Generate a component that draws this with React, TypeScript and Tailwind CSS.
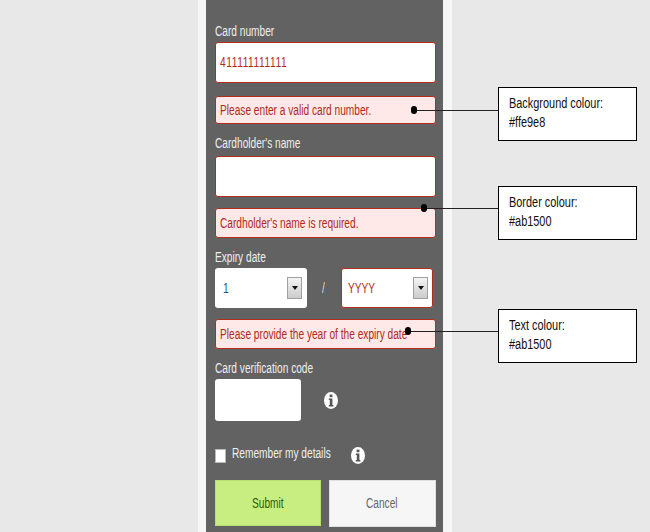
import type { ReactNode } from "react";

function Info({ className }: { className: string }) {
  return (
    <svg viewBox="0 0 14 17" width="14" height="17" className={className}>
      <ellipse cx="7" cy="8.5" rx="7" ry="8.5" fill="#ffffff" />
      <rect x="5.6" y="2.6" width="2.8" height="2.6" fill="#555555" />
      <path d="M4.8 6.6h3.6v6.4h1v1.4H4.8V13h1V8h-1z" fill="#555555" />
    </svg>
  );
}

function T({ children }: { children: ReactNode }) {
  return <span className="inline-block origin-left scale-x-[0.725] whitespace-nowrap text-[14px]">{children}</span>;
}

function Label({ children, className = "" }: { children: ReactNode; className?: string }) {
  return (
    <div className={`h-[14px] leading-[13px] text-[#eeeeee] ${className}`}>
      <T>{children}</T>
    </div>
  );
}

function ErrorBox({ children, className = "" }: { children: ReactNode; className?: string }) {
  return (
    <div className={`flex w-[221px] items-center rounded-[3px] border border-[#b32d1c] bg-[#ffe9e8] pl-[4px] text-[#b02a1a] ${className}`}>
      <T>{children}</T>
    </div>
  );
}

function SelectArrow() {
  return (
    <div className="flex h-[22px] w-[15px] items-center justify-center border border-[#a0a0a0] bg-gradient-to-b from-[#f4f4f4] to-[#cccccc]">
      <svg viewBox="0 0 6 4" width="6" height="4">
        <path d="M0 0h6L3 4z" fill="#111111" />
      </svg>
    </div>
  );
}

function Callout({ title, value, className }: { title: string; value: string; className: string }) {
  return (
    <div className={`absolute left-[498px] h-[54px] w-[139px] border border-black bg-white pl-[10px] pt-[6px] text-[14px] leading-[19px] text-[#111111] ${className}`}>
      <div className="origin-left scale-x-[0.78] whitespace-nowrap">{title}</div>
      <div className="origin-left scale-x-[0.78] whitespace-nowrap">{value}</div>
    </div>
  );
}

function Pointer({ x, y }: { x: number; y: number }) {
  return (
    <>
      <div className="absolute h-px bg-[#222222]" style={{ left: x, top: y, width: 498 - x }} />
      <div className="absolute h-[8px] w-[6px] rounded-full bg-black" style={{ left: x - 3, top: y - 4 }} />
    </>
  );
}

export default function App() {
  return (
    <div className="relative h-[532px] w-[650px] overflow-hidden bg-[#e8e8e8] font-['Liberation_Sans',sans-serif]">
      <div className="ml-[198px] h-full w-[254px] bg-[#f6f6f6] pl-[8px] pr-[9px]">
        <div className="h-full w-[237px] bg-[#626262] pl-[9px] pt-[24px]">
          <Label>Card number</Label>
          <div className="mt-[4px] flex h-[41px] w-[221px] items-center rounded-[3px] border border-[#b32d1c] bg-white pl-[4px] tracking-[0.8px] text-[#b02a1a]">
            <T>411111111111</T>
          </div>
          <ErrorBox className="mt-[13px] h-[28px]">Please enter a valid card number.</ErrorBox>

          <Label className="mt-[12px]">Cardholder's name</Label>
          <div className="mt-[6px] h-[41px] w-[221px] rounded-[3px] border border-[#b32d1c] bg-white" />
          <ErrorBox className="mt-[11px] h-[30px]">Cardholder's name is required.</ErrorBox>

          <Label className="mt-[12px]">Expiry date</Label>
          <div className="mt-[4px] flex items-center">
            <div className="flex h-[40px] w-[92px] items-center rounded-[3px] bg-white pl-[8px] pr-[5px] text-[#1a5a80]">
              <T>1</T>
              <div className="ml-auto">
                <SelectArrow />
              </div>
            </div>
            <div className="ml-[15px] w-[4px] text-[#dddddd]">
              <T>/</T>
            </div>
            <div className="ml-[15px] flex h-[40px] w-[92px] items-center rounded-[3px] border border-[#b32d1c] bg-white pl-[6px] pr-[4px] text-[#b02a1a]">
              <T>YYYY</T>
              <div className="ml-auto">
                <SelectArrow />
              </div>
            </div>
          </div>
          <ErrorBox className="mt-[11px] h-[30px]">Please provide the year of the expiry date</ErrorBox>

          <Label className="mt-[12px]">Card verification code</Label>
          <div className="mt-[4px] flex items-center">
            <div className="h-[42px] w-[86px] rounded-[3px] bg-white" />
            <Info className="ml-[23px]" />
          </div>

          <div className="mt-[24px] flex h-[20px] items-start">
            <div className="mt-[4px] h-[14px] w-[11px] border border-[#b8b8b8] bg-white" />
            <Label className="ml-[6px] mt-[1px] w-[99px]">Remember my details</Label>
            <Info className="ml-[20px] mt-[2px]" />
          </div>

          <div className="mt-[15px] flex items-start">
            <div className="flex h-[46px] w-[106px] items-center border border-[#b5e070] bg-[#c8ee82] pl-[36px] text-[#2f5a0c]">
              <T>Submit</T>
            </div>
            <div className="ml-[8px] flex h-[47px] w-[107px] items-center border border-[#e0e0e0] bg-[#f6f6f6] pl-[36px] text-[#666666]">
              <T>Cancel</T>
            </div>
          </div>
        </div>
      </div>

      <Pointer x={414} y={110} />
      <Pointer x={424} y={208} />
      <Pointer x={408} y={331} />
      <Callout title="Background colour:" value="#ffe9e8" className="top-[87px]" />
      <Callout title="Border colour:" value="#ab1500" className="top-[186px]" />
      <Callout title="Text colour:" value="#ab1500" className="top-[309px]" />
    </div>
  );
}
